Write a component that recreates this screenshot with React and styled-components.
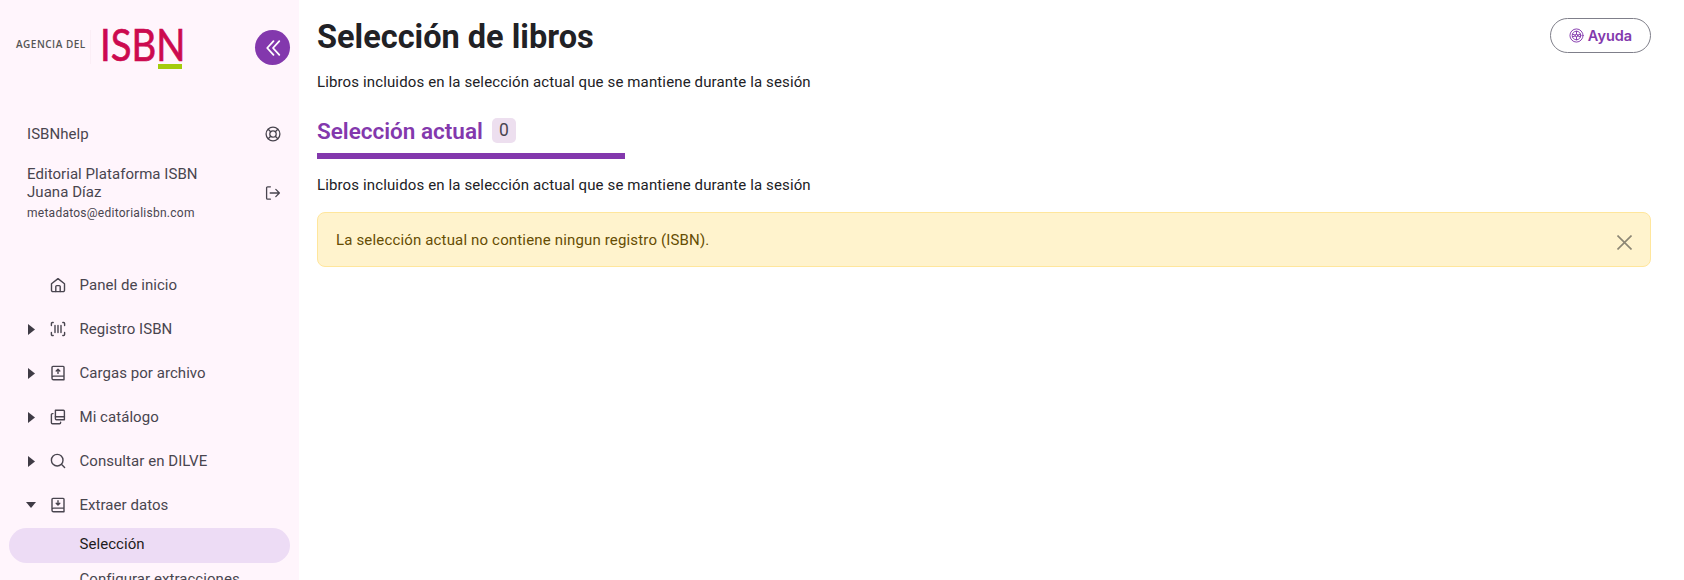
import React from "react";
import styled, { createGlobalStyle } from "styled-components";

const Global = createGlobalStyle`
  html, body { margin: 0; padding: 0; height: 100%; overflow: hidden; background: #fff; }
  body { font-family: Roboto, "Liberation Sans", sans-serif; color: #1f1f23; }
  * { box-sizing: border-box; }
`;

const Page = styled.div`
  display: flex;
  width: 1684px;
  height: 580px;
  overflow: hidden;
`;

const Sidebar = styled.aside`
  width: 299px;
  flex: none;
  background: #fff5fc;
  padding: 30px 9px 0 9px;
  overflow: hidden;
`;

const Brand = styled.div`
  display: flex;
  align-items: flex-start;
  justify-content: space-between;
  height: 74px;
`;

const Logo = styled.div`
  display: flex;
  align-items: flex-start;
  padding-left: 7px;
`;

const LogoPrefix = styled.span`
  font-family: "Open Sans", sans-serif;
  font-size: 10px;
  font-weight: 600;
  letter-spacing: 0.5px;
  color: #555;
  line-height: 28px;
  width: 75px;
  height: 34px;
  border-right: 1px solid #fbeef6;
  white-space: nowrap;
`;

const LogoMark = styled.span`
  position: relative;
  margin-left: 9px;
  width: 82px;
  height: 39px;
  white-space: nowrap;
  &::after {
    content: "";
    position: absolute;
    right: 0;
    bottom: 0;
    width: 24px;
    height: 5px;
    background: #a4cc0c;
  }
`;

const LogoLetters = styled.span`
  display: block;
  font-family: Lato, sans-serif;
  font-size: 45px;
  line-height: 26px;
  padding-top: 1px;
  color: #cc0a4f;
  -webkit-text-stroke: 0.7px #cc0a4f;
  transform: scaleX(0.85);
  transform-origin: left center;
`;

const Collapse = styled.button`
  width: 35px;
  height: 35px;
  border: 0;
  padding: 0;
  border-radius: 50%;
  background: #8338ad;
  color: #fff;
  display: grid;
  place-items: center;
`;

const UserBlock = styled.div`
  margin-top: 21px;
  padding: 0 9px 0 18px;
  display: flex;
  flex-direction: column;
  gap: 22px;
  color: #49454f;
`;

const UserRow = styled.div`
  display: flex;
  align-items: center;
  justify-content: space-between;
  font-size: 15px;
  line-height: 18px;
  letter-spacing: 0.05px;
`;

const Email = styled.div`
  font-size: 12px;
  line-height: 16px;
  margin-top: 4px;
  letter-spacing: 0.26px;
`;

const Nav = styled.nav`
  margin-top: 42px;
  display: flex;
  flex-direction: column;
`;

const NavRow = styled.div`
  height: 44px;
  display: flex;
  align-items: center;
  color: #49454f;
  font-size: 15px;
  letter-spacing: 0.05px;
  white-space: nowrap;
`;

const Caret = styled.span`
  width: 41px;
  padding-left: 19px;
  flex: none;
  display: flex;
  color: #3f3b45;
`;

const NavIcon = styled.span`
  width: 29.5px;
  flex: none;
  display: flex;
  color: #49454f;
`;

const SubItem = styled.div`
  height: 35px;
  flex: none;
  margin-top: ${(p) => (p.$active ? "1px" : "-2px")};
  padding-left: 70.5px;
  padding-bottom: ${(p) => (p.$active ? "3px" : "0")};
  display: flex;
  align-items: center;
  font-size: 15px;
  letter-spacing: 0.05px;
  border-radius: 18px;
  white-space: nowrap;
  color: ${(p) => (p.$active ? "#1d1b20" : "#49454f")};
  background: ${(p) => (p.$active ? "#eddcf5" : "transparent")};
`;

const Main = styled.main`
  flex: 1;
  min-width: 0;
  padding: 18px 33px 0 18px;
`;

const Header = styled.header`
  display: flex;
  align-items: flex-start;
  justify-content: space-between;
`;

const Title = styled.h1`
  margin: 1px 0 0;
  font-size: 32.5px;
  line-height: 36px;
  font-weight: 700;
  color: #212125;
`;

const HelpButton = styled.button`
  width: 101px;
  height: 35px;
  border: 1px solid #7f7f8a;
  border-radius: 18px;
  background: #fff;
  color: #8338ad;
  font-family: Inter, sans-serif;
  font-size: 14.5px;
  font-weight: 600;
  display: flex;
  align-items: center;
  justify-content: center;
  gap: 4px;
  padding: 0;
`;

const Lead = styled.p`
  margin: ${(p) => p.$top}px 0 0;
  font-size: 15px;
  line-height: 20px;
  letter-spacing: 0.13px;
  color: #212125;
`;

const Tabs = styled.div`
  margin-top: 16px;
  width: 308px;
  height: 51px;
  border-bottom: 6px solid #8338ad;
  display: flex;
  align-items: flex-start;
  gap: 9px;
  padding-top: 8px;
`;

const TabLabel = styled.span`
  font-size: 22.5px;
  line-height: 30px;
  font-weight: 600;
  color: #8338ad;
`;

const Badge = styled.span`
  width: 24px;
  height: 25px;
  margin-top: 2px;
  border-radius: 5px;
  background: #eddfef;
  color: #49454f;
  font-size: 17.5px;
  display: grid;
  place-items: center;
  padding-bottom: 2px;
`;

const Alert = styled.div`
  margin-top: 17px;
  height: 55px;
  background: #fff3cd;
  border: 1px solid #ffe69c;
  border-radius: 8px;
  color: #664d03;
  font-size: 15px;
  letter-spacing: 0.16px;
  display: flex;
  align-items: center;
  justify-content: space-between;
  padding: 0 18px 0 18px;
`;

const CloseButton = styled.button`
  border: 0;
  background: transparent;
  padding: 0;
  display: flex;
  color: #8c8674;
  margin-top: 6px;
`;

const Svg = ({ size = 16, children, width = 1.4, ...rest }) => (
  <svg width={size} height={size} viewBox="0 0 16 16" fill="none" stroke="currentColor" strokeWidth={width} strokeLinecap="round" strokeLinejoin="round" {...rest}>
    {children}
  </svg>
);

const Home = () => (
  <Svg>
    <path d="M1.5 6.8 8 1.6l6.5 5.2v6.4a1.4 1.4 0 0 1-1.4 1.4H2.9a1.4 1.4 0 0 1-1.4-1.4z" />
    <path d="M5.8 14.5V9.6a1 1 0 0 1 1-1h2.4a1 1 0 0 1 1 1v4.9" />
  </Svg>
);
const Barcode = () => (
  <Svg>
    <path d="M3.2 1.5H2.4a1 1 0 0 0-1 1v2M12.8 1.5h.8a1 1 0 0 1 1 1v2M3.2 14.5H2.4a1 1 0 0 1-1-1v-2M12.8 14.5h.8a1 1 0 0 0 1-1v-2" />
    <path d="M5 4.4v7.2M8 4.4v7.2M11 4.4v7.2" />
  </Svg>
);
const BookBase = ({ children }) => (
  <Svg>
    <path d="M2 12.6V2.4a1 1 0 0 1 1-1h10.2a.8.8 0 0 1 .8.8v12.6H3.6A1.6 1.6 0 0 1 2 13.2v-.6A1.5 1.5 0 0 1 3.5 11.1H14" />
    {children}
  </Svg>
);
const BookUp = () => (
  <BookBase>
    <path d="M8 8.4V4.4M6.2 6 8 4.2 9.8 6" strokeWidth="1.4" />
  </BookBase>
);
const BookDown = () => (
  <BookBase>
    <path d="M8 3.8v4M6.2 6.2 8 8l1.8-1.8" strokeWidth="1.4" />
  </BookBase>
);
const Catalog = () => (
  <Svg>
    <path d="M5.4 1.2h8a1 1 0 0 1 1 1v8.6H6.4a1 1 0 0 1-1-1z" />
    <path d="M5.4 7.8h9" />
    <path d="M3 4.6H2.4a1 1 0 0 0-1 1v8.2a1 1 0 0 0 1 1h7.2a1 1 0 0 0 1-1v-.6" />
  </Svg>
);
const Search = () => (
  <Svg>
    <circle cx="7.2" cy="7.2" r="5.8" />
    <path d="m11.6 11.6 3 3" />
  </Svg>
);
const Right = () => (
  <svg width="7" height="11" viewBox="0 0 7 11" fill="currentColor"><path d="M0 0l7 5.5L0 11z" /></svg>
);
const Down = () => (
  <svg width="10" height="7" viewBox="0 0 10 7" fill="currentColor" style={{ marginLeft: -2, marginTop: 1 }}><path d="M0 0h10L5 6z" /></svg>
);
const ChevronsLeft = () => (
  <Svg size={18} viewBox="0 0 18 18" width={1.8}>
    <path d="M9.5 2.2 3.2 9l6.3 6.8M15.3 2.2 9 9l6.3 6.8" />
  </Svg>
);
const Lifebuoy = () => (
  <Svg size={16} width={1.3}>
    <circle cx="8" cy="8" r="6.9" />
    <circle cx="8" cy="8" r="3.2" />
    <path d="m3.2 3.2 2.5 2.5M12.8 3.2l-2.5 2.5M3.2 12.8l2.5-2.5M12.8 12.8l-2.5-2.5" />
  </Svg>
);
const Logout = () => (
  <Svg size={16} width={1.3}>
    <path d="M5.4 1.8H2.6a1 1 0 0 0-1 1v10.4a1 1 0 0 0 1 1h2.8" />
    <path d="M5.2 8h9.2M10.8 4.4 14.4 8l-3.6 3.6" />
  </Svg>
);
const Aperture = () => (
  <Svg size={15} width={1}>
    <circle cx="8" cy="8" r="7" />
    <circle cx="8" cy="8" r="4.6" />
    <circle cx="8" cy="8" r="1.4" />
    <path d="M8 3.4v3.2M8 9.4v3.2M3.6 6.6l3 .9M9.4 8.5l3 .9M12.4 6.6l-3 .9M6.6 8.5l-3 .9" />
  </Svg>
);
const Close = () => (
  <svg width="15" height="15" viewBox="0 0 15 15" fill="none" stroke="currentColor" strokeWidth="1.6"><path d="M.5.5l14 14M14.5.5l-14 14" /></svg>
);

const navItems = [
  { label: "Panel de inicio", Icon: Home },
  { label: "Registro ISBN", Icon: Barcode, caret: Right },
  { label: "Cargas por archivo", Icon: BookUp, caret: Right },
  { label: "Mi catálogo", Icon: Catalog, caret: Right },
  { label: "Consultar en DILVE", Icon: Search, caret: Right },
  { label: "Extraer datos", Icon: BookDown, caret: Down },
];

const sentence = "Libros incluidos en la selección actual que se mantiene durante la sesión";

export default function App() {
  return (
    <Page>
      <Global />
      <Sidebar>
        <Brand>
          <Logo>
            <LogoPrefix>AGENCIA DEL</LogoPrefix>
            <LogoMark><LogoLetters>ISBN</LogoLetters></LogoMark>
          </Logo>
          <Collapse aria-label="Contraer"><ChevronsLeft /></Collapse>
        </Brand>
        <UserBlock>
          <UserRow>
            <span>ISBNhelp</span>
            <Lifebuoy />
          </UserRow>
          <UserRow>
            <div>
              Editorial Plataforma ISBN<br />Juana Díaz
              <Email>metadatos@editorialisbn.com</Email>
            </div>
            <Logout />
          </UserRow>
        </UserBlock>
        <Nav>
          {navItems.map(({ label, Icon, caret: CaretIcon }) => (
            <NavRow key={label}>
              <Caret>{CaretIcon ? <CaretIcon /> : null}</Caret>
              <NavIcon><Icon /></NavIcon>
              {label}
            </NavRow>
          ))}
          <SubItem $active>Selección</SubItem>
          <SubItem>Configurar extracciones</SubItem>
        </Nav>
      </Sidebar>
      <Main>
        <Header>
          <Title>Selección de libros</Title>
          <HelpButton><Aperture />Ayuda</HelpButton>
        </Header>
        <Lead $top={17}>{sentence}</Lead>
        <Tabs>
          <TabLabel>Selección actual</TabLabel>
          <Badge>0</Badge>
        </Tabs>
        <Lead $top={16}>{sentence}</Lead>
        <Alert>
          La selección actual no contiene ningun registro (ISBN).
          <CloseButton aria-label="Cerrar"><Close /></CloseButton>
        </Alert>
      </Main>
    </Page>
  );
}
